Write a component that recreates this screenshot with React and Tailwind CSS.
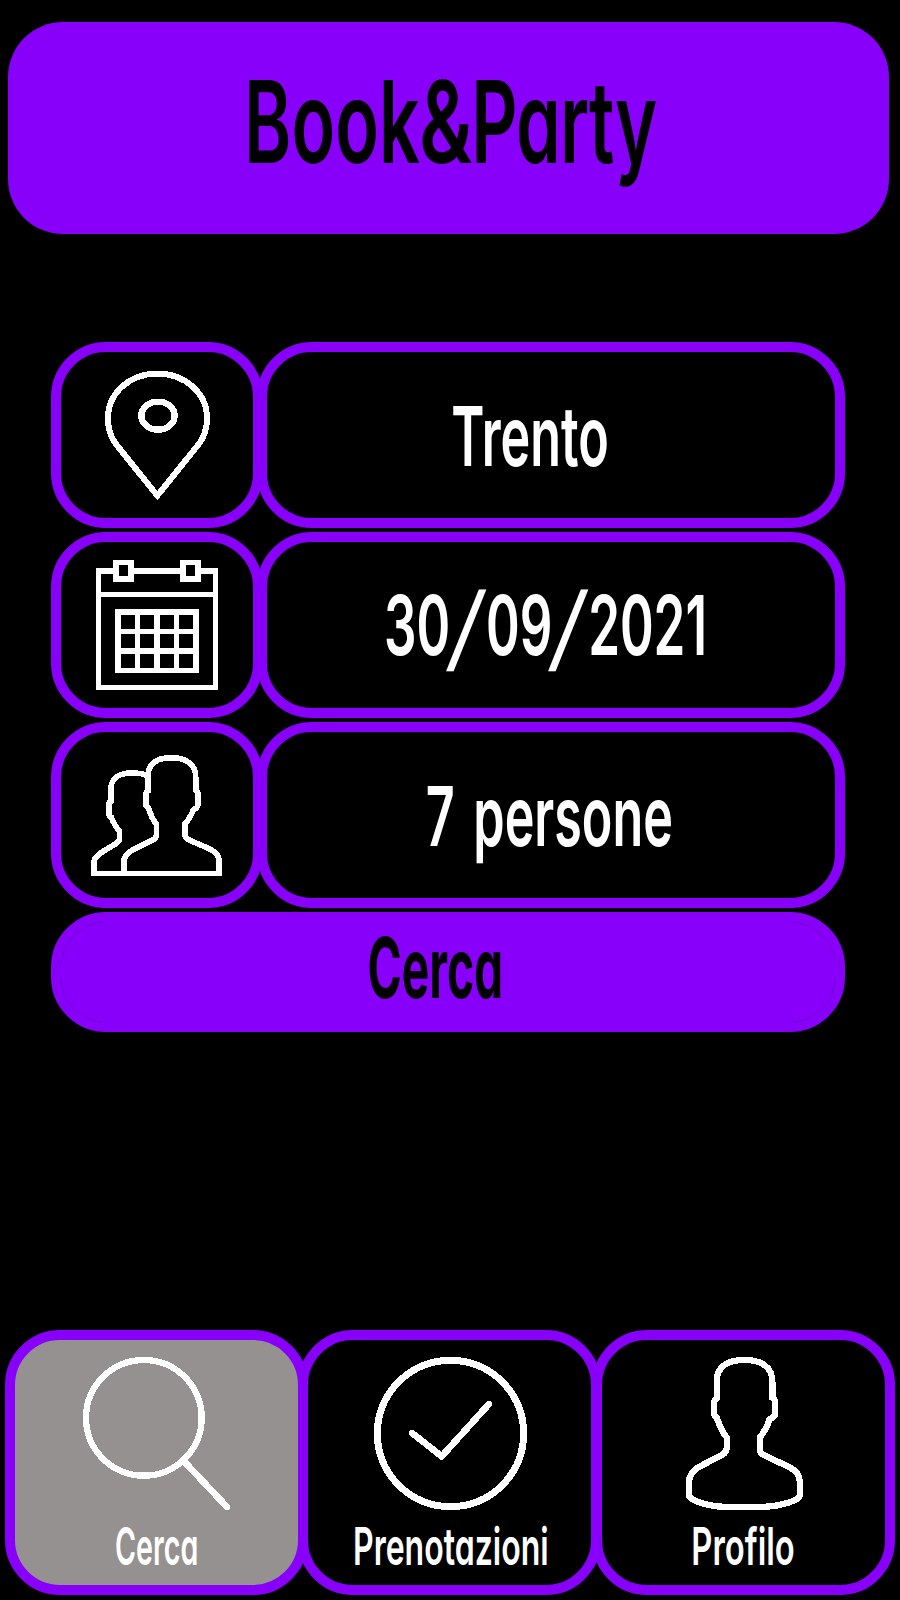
const frame = "border-[10px] border-[#8800fa] rounded-[55px]";

function Label({ className, children }) {
  return (
    <span
      className={`block whitespace-nowrap leading-none [font-feature-settings:'cv11'] ${className}`}
    >
      {children}
    </span>
  );
}

function Slash() {
  return (
    <span className="mr-[14.500px] ml-[10.500px] inline-block translate-y-[2px] scale-y-[1.13] -skew-x-[25deg] font-extrabold">
      /
    </span>
  );
}

function Icon({ className, viewBox, children }) {
  return (
    <svg
      className={`block shrink-0 ${className}`}
      viewBox={viewBox}
      fill="none"
      stroke="#fff"
      strokeWidth="19"
      shapeRendering="crispEdges"
      aria-hidden="true"
    >
      {children}
    </svg>
  );
}

function PinIcon() {
  return (
    <Icon className="h-[166px] w-48" viewBox="63 66 576 498">
      <path
        strokeWidth="18"
        d="M352 497 L226 340 C210 318 204 295 204 264 C204 190 268 131 352 131 S501 190 501 264 C501 295 494 318 478 340 Z"
      />
      <ellipse cx="354" cy="257" rx="50" ry="42" />
    </Icon>
  );
}

function CalendarIcon() {
  return (
    <Icon className="h-[166px] w-48" viewBox="63 51 576 498">
      <g fill="#fff" stroke="none">
        <path
          fillRule="evenodd"
          d="M168 129H534V495H168Z M183 147H519V201H183Z M183 216H519V480H183Z"
        />
        <path
          fillRule="evenodd"
          d="M225 252H477V444H225Z M243 270H285V312H243Z M300 270H342V312H300Z M360 270H402V312H360Z M417 270H459V312H417Z M243 327H285V369H243Z M300 327H342V369H300Z M360 327H402V369H360Z M417 327H459V369H417Z M243 387H285V429H243Z M300 387H342V429H300Z M360 387H402V429H360Z M417 387H459V429H417Z"
        />
        <path d="M219 105H282V171H219Z M420 105H483V171H420Z" />
        <path fill="#000" d="M237 120H264V153H237Z M438 120H465V153H438Z" />
      </g>
    </Icon>
  );
}

function PeopleIcon() {
  return (
    <Icon className="h-[166px] w-48" viewBox="63 51 576 498">
      <path
        strokeWidth="17"
        d="M324 183 C312 176 295 174 275 174 C238 174 212 190 212 225 V259 Q206 261 206 272 V295 Q207 303 214 307 C220 322 228 337 238 348 V373 Q237 380 228 386 L188 410 C170 421 161 430 161 450 V475 H537 V440 C537 420 527 411 507 401 L450 376 Q434 370 434 355 V328 C444 317 453 302 460 285 Q474 277 474 269 V238 Q474 229 467 224 V185 C467 148 438 128 394 128 C350 128 324 146 324 185 V227 Q317 230 317 240 V268 Q318 275 326 280 C331 298 340 316 349 328 V360 Q349 370 336 376 L288 400 C263 411 251 422 251 446 V475"
      />
    </Icon>
  );
}

function SearchIcon() {
  return (
    <Icon className="h-[175px] w-[283px]" viewBox="45 60 849 525">
      <circle cx="431.500" cy="293.500" r="173.500" />
      <path strokeWidth="20" strokeLinecap="round" d="M552 424 L681 561" />
    </Icon>
  );
}

function CheckIcon() {
  return (
    <Icon className="h-[175px] w-[283px]" viewBox="24 60 849 525">
      <circle cx="451.500" cy="340.500" r="219.500" strokeWidth="21" />
      <path strokeWidth="20" strokeLinecap="round" d="M336 339 L425 409 L567 252" />
    </Icon>
  );
}

function ProfileIcon() {
  return (
    <Icon className="h-[175px] w-[283px]" viewBox="36 60 849 525">
      <path d="M463 120 C410 120 380 142 380 185 V235 Q372 239 372 250 V283 Q373 289 381 295 C388 316 398 338 410 352 V385 Q409 397 398 404 L330 439 C305 452 297 470 297 487 V527 C305 545 365 561 408 561 H520 C570 559 625 542 630 527 V487 C629 465 617 450 597 441 L527 408 Q510 400 510 390 V352 C522 337 532 318 538 299 Q555 289 555 284 V247 Q555 238 547 233 V185 C547 142 516 120 463 120 Z" />
    </Icon>
  );
}

function Field({ icon, children }) {
  return (
    <div className="flex h-[186px]">
      <div className={`w-[212px] shrink-0 ${frame}`}>{icon}</div>
      <div className={`-ml-1.5 flex flex-1 items-center justify-center ${frame}`}>{children}</div>
    </div>
  );
}

function Tab({ icon, className = "", children }) {
  return (
    <div className={`flex h-[265px] w-[303px] shrink-0 flex-col items-center ${frame} ${className}`}>
      {icon}
      <div className="flex h-16 items-center justify-center">{children}</div>
    </div>
  );
}

export default function App() {
  return (
    <div className="flex h-[1600px] w-[900px] flex-col overflow-hidden bg-black pt-[22px] font-['Inter',sans-serif] text-white">
      <header className="ml-2 flex h-[212px] w-[881px] items-center justify-center rounded-[55px] bg-[#8800fa] pb-[13px] pl-1 text-black">
        <Label className="scale-x-[0.63] text-[114px] font-semibold">
          Book<span className="mx-[3px] inline-block scale-x-[1.12]">&amp;</span>
          <span className="-tracking-[0.012em]">Party</span>
        </Label>
      </header>

      <main className="mt-[108px] ml-[51px] flex w-[794px] flex-col gap-1">
        <Field icon={<PinIcon />}>
          <Label className="mt-0.5 -ml-[42px] scale-x-[0.605] text-[83px] font-semibold">Trento</Label>
        </Field>
        <Field icon={<CalendarIcon />}>
          <Label className="-ml-2.5 scale-x-[0.615] text-[83px] font-semibold">
            30<Slash />09<Slash />2021
          </Label>
        </Field>
        <Field icon={<PeopleIcon />}>
          <Label className="mt-0.5 -ml-1 scale-x-[0.605] text-[83px] font-semibold [word-spacing:10px]">
            7 persone
          </Label>
        </Field>
        <button
          type="button"
          className={`flex h-[120px] items-center justify-center [background:linear-gradient(#8800fa,#8800fa)_padding-box,#3a0070] pr-[26px] pb-[9px] text-black ${frame}`}
        >
          <Label className="scale-x-[0.55] text-[84px] font-bold">Cerca</Label>
        </button>
      </main>

      <nav className="mt-auto mb-[5px] ml-[5px] flex">
        <Tab icon={<SearchIcon />} className="bg-[#959190]">
          <Label className="scale-x-[0.55] text-[52px] font-semibold">Cerca</Label>
        </Tab>
        <Tab icon={<CheckIcon />} className="-ml-2.5">
          <Label className="ml-[3px] scale-x-[0.616] text-[52px] font-semibold">Prenotazioni</Label>
        </Tab>
        <Tab icon={<ProfileIcon />} className="-ml-[9px]">
          <Label className="scale-x-[0.63] text-[52px] font-semibold">Profilo</Label>
        </Tab>
      </nav>
    </div>
  );
}
